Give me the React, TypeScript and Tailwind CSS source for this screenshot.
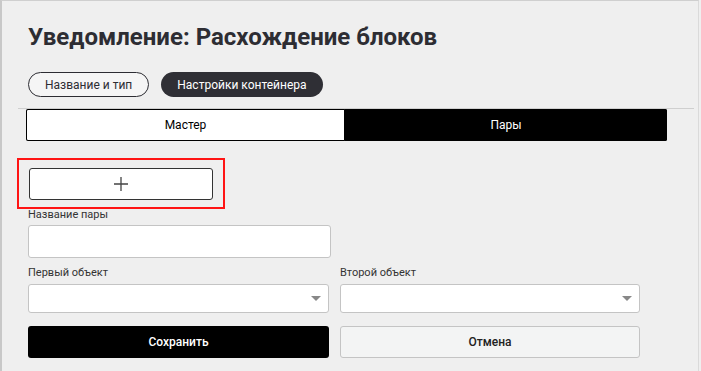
import { useState } from 'react';

function Select({ label }: { label: string }) {
  return (
    <div className="flex flex-col">
      <span className="text-[11px] leading-[14px] text-[#333] mb-[4px]">{label}</span>
      <div className="relative h-[29px] bg-white border border-[#c4c4c4] rounded-[3px]">
        <span className="absolute right-[7px] top-[11px] w-0 h-0 border-l-[5px] border-r-[5px] border-t-[5px] border-l-transparent border-r-transparent border-t-[#888]" />
      </div>
    </div>
  );
}

export default function App() {
  const [tab, setTab] = useState<'master' | 'pairs'>('pairs');

  return (
    <div
      className="w-[701px] h-[371px] bg-[#efefef] overflow-hidden"
      style={{ fontFamily: 'Roboto, "Liberation Sans", sans-serif' }}
    >
      <div className="w-[699px] h-[371px] border-t border-t-[#cfcfcf] border-l-2 border-l-[#c8c8c8] border-r border-r-[#dadada]">
        <h1 className="pl-[26px] pt-[20px] text-[24px] leading-[32px] font-bold text-[#2d2d33]">
          Уведомление: Расхождение блоков
        </h1>

        <div className="flex gap-[12px] pl-[26px] mt-[19px]">
          <button className="h-[25px] px-[16px] rounded-full border border-[#2d2d33] bg-[#f5f5f5] text-[12px] text-[#2d2d33]">
            Название и тип
          </button>
          <button className="h-[25px] px-[16px] rounded-full bg-[#2f2f35] text-[12px] text-white">
            Настройки контейнера
          </button>
        </div>

        <div className="ml-[16px] mr-[4px] mt-[11px] border-t border-[#cfcfcf]" />

        <div className="ml-[24px] w-[641px] h-[32px] flex rounded-[2px] overflow-hidden bg-black">
          <button
            onClick={() => setTab('master')}
            className="w-[319px] h-full bg-white border border-black rounded-l-[2px] text-[12px] text-black"
          >
            Мастер
          </button>
          <button
            onClick={() => setTab('pairs')}
            className="flex-1 h-full bg-black text-[12px] text-white"
          >
            Пары
          </button>
        </div>
        <span className="hidden">{tab}</span>

        <div className="ml-[15px] mt-[17px] w-[208px] h-[51px] border-2 border-[#ff1414] flex items-center justify-center">
          <button className="w-[184px] h-[32px] bg-white border border-[#333] rounded-[3px] flex items-center justify-center">
            <svg width="16" height="16" viewBox="0 0 16 16">
              <path d="M8 1v14M1 8h14" stroke="#444" strokeWidth="1.3" />
            </svg>
          </button>
        </div>

        <div className="pl-[26px] pr-[60px] mt-[-1px]">
          <span className="block text-[11px] leading-[14px] text-[#333] mb-[3px]">Название пары</span>
          <div className="w-[303px] h-[33px] bg-white border border-[#c4c4c4] rounded-[3px]" />

          <div className="grid grid-cols-[301px_300px] gap-x-[11px] mt-[8px]">
            <Select label="Первый объект" />
            <Select label="Второй объект" />
          </div>

          <div className="grid grid-cols-[301px_300px] gap-x-[11px] mt-[13px]">
            <button className="h-[32px] bg-black rounded-[3px] text-[12px] font-medium text-white">
              Сохранить
            </button>
            <button className="h-[32px] bg-[#f3f4f4] border border-[#c4c4c4] rounded-[3px] text-[12px] font-medium text-[#222]">
              Отмена
            </button>
          </div>
        </div>
      </div>
    </div>
  );
}
